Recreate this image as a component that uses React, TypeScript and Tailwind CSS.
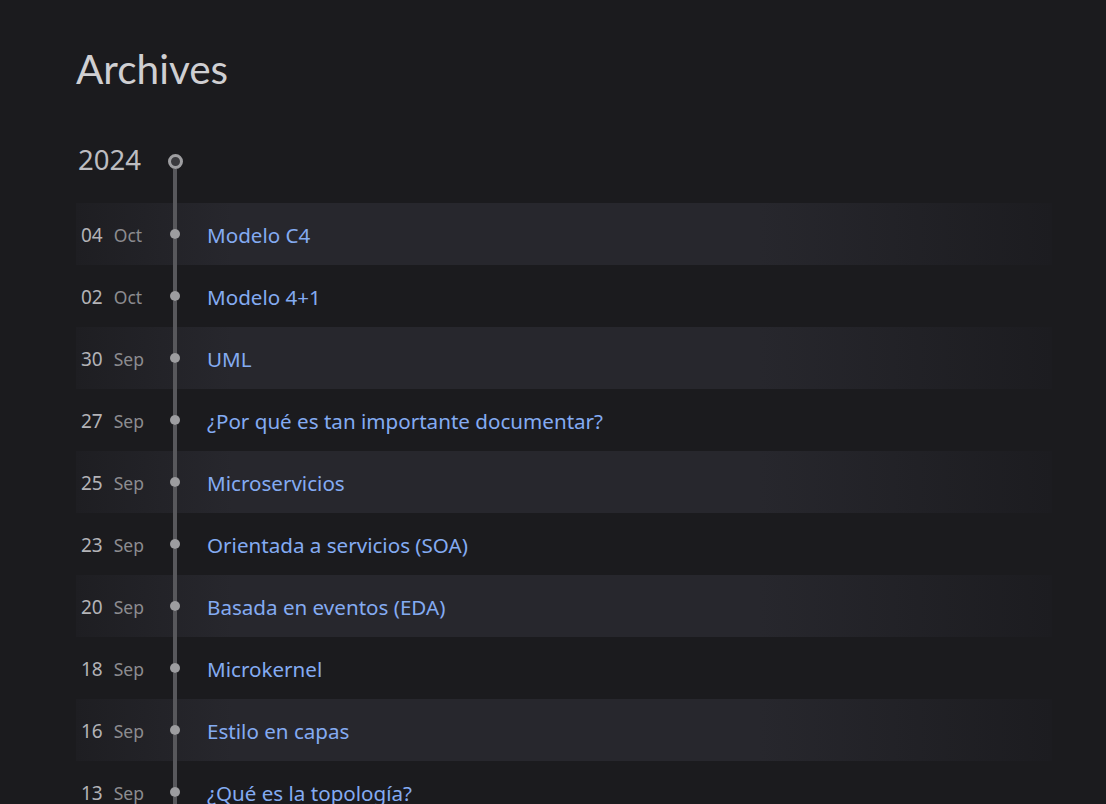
type Post = {
  day: string;
  month: string;
  title: string;
};

const posts: Post[] = [
  { day: '04', month: 'Oct', title: 'Modelo C4' },
  { day: '02', month: 'Oct', title: 'Modelo 4+1' },
  { day: '30', month: 'Sep', title: 'UML' },
  { day: '27', month: 'Sep', title: '¿Por qué es tan importante documentar?' },
  { day: '25', month: 'Sep', title: 'Microservicios' },
  { day: '23', month: 'Sep', title: 'Orientada a servicios (SOA)' },
  { day: '20', month: 'Sep', title: 'Basada en eventos (EDA)' },
  { day: '18', month: 'Sep', title: 'Microkernel' },
  { day: '16', month: 'Sep', title: 'Estilo en capas' },
  { day: '13', month: 'Sep', title: '¿Qué es la topología?' },
];

function PostRow({ post, striped }: { post: Post; striped: boolean }) {
  return (
    <li
      className={
        'flex h-[62px] ' +
        (striped
          ? 'bg-[linear-gradient(to_right,#1e1e22_0%,#27272d_16%,#27272d_70%,#1c1c20_100%)]'
          : '')
      }
    >
      <div className="flex w-[89px] items-center gap-[11px] pl-[5px] pt-[2px] font-['Noto_Sans',sans-serif]">
        <span className="text-[19px] text-[#b3b3b7]">{post.day}</span>
        <span className="text-[17.5px] text-[#8c8c90]">{post.month}</span>
      </div>
      <div className="flex w-[20px] flex-col items-center">
        <div className="w-1 flex-1 bg-[#58585c]" />
        <div className="h-[10px] w-[10px] rounded-full bg-[#9d9da0]" />
        <div className="w-1 flex-1 bg-[#58585c]" />
      </div>
      <div className="flex items-center pl-[22px] pt-[2px]">
        <a
          href="#"
          className="font-['Noto_Sans',sans-serif] text-[20.6px] text-[#84abf2]"
        >
          {post.title}
        </a>
      </div>
    </li>
  );
}

export default function App() {
  return (
    <main className="min-h-screen bg-[#1b1b1e] pl-[76px] pr-[54px] pt-[45px]">
      <h1 className="font-['Lato',sans-serif] text-[40.5px] leading-[48px] text-[#cfcfd2]">
        Archives
      </h1>

      <div className="mt-[28px]">
        <div className="flex h-[82px]">
          <div className="w-[89px] pl-[2px] pt-[23px] font-['Noto_Sans',sans-serif] text-[27.5px] leading-[32px] text-[#bdbdc1]">
            2024
          </div>
          <div className="flex w-[20px] flex-col items-center pt-[33px]">
            <div className="h-[15px] w-[15px] rounded-full border-[3px] border-[#9e9ea1] bg-[#3a3a3e]" />
            <div className="w-1 flex-1 bg-[#58585c]" />
          </div>
        </div>

        <ul>
          {posts.map((post, i) => (
            <PostRow key={post.day + post.month} post={post} striped={i % 2 === 0} />
          ))}
        </ul>
      </div>
    </main>
  );
}
